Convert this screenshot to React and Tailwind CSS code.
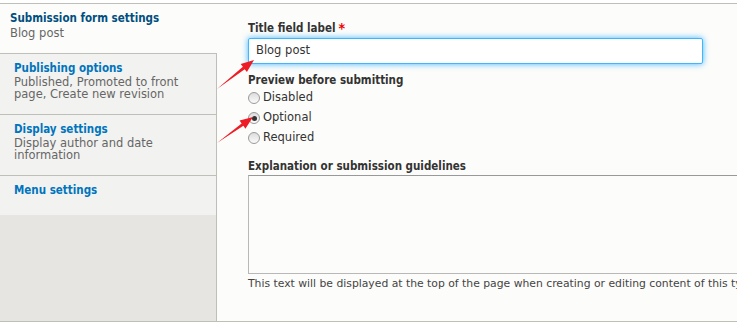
import React from "react";

const tabs = [
  {
    title: "Publishing options",
    summary: ["Published, Promoted to front", "page, Create new revision"],
  },
  {
    title: "Display settings",
    summary: ["Display author and date", "information"],
  },
  { title: "Menu settings", summary: [] },
];

const options = [
  { label: "Disabled", checked: false },
  { label: "Optional", checked: true },
  { label: "Required", checked: false },
];

function Radio({ checked }) {
  return (
    <span className="flex h-[12px] w-[12px] items-center justify-center rounded-full border border-[#9a9a9a] bg-gradient-to-b from-[#dcdcdc] to-[#fbfbfb]">
      {checked && <span className="h-[5px] w-[5px] rounded-full bg-[#333]" />}
    </span>
  );
}

function Arrows() {
  // red annotation arrows drawn over the form
  return (
    <svg
      className="pointer-events-none absolute left-0 top-0"
      width="737"
      height="322"
      viewBox="0 0 737 322"
    >
      <polygon
        fill="#ee1c24"
        points="217,89 244.7,69.2 246.9,71.9 254,60 240.7,64.1 242.9,66.8"
      />
      <polygon
        fill="#ee1c24"
        points="217,143 243.4,125.8 245.4,128.7 253,117 239.6,120.5 241.6,123.4"
      />
    </svg>
  );
}

export default function App() {
  const font = "font-['DejaVu_Sans',sans-serif]";
  const bold = "font-['DejaVu_Sans_Condensed','DejaVu_Sans',sans-serif] font-bold";

  return (
    <div className={`relative h-[322px] w-[737px] overflow-hidden bg-white pt-[3px] text-[11.5px] ${font}`}>
      <div className="flex h-[319px] w-[820px] border-y border-[#bfbfba] bg-[#fcfcfa]">
        {/* vertical tabs menu */}
        <ul className="flex w-[217px] shrink-0 flex-col">
          <li className="h-[49px] pl-[10px] pt-[6px]">
            <div className={`leading-[16px] text-[#004f80] ${bold}`}>
              Submission form settings
            </div>
            <div className="leading-[14px] text-[#666]">Blog post</div>
          </li>
          {tabs.map((tab) => (
            <li
              key={tab.title}
              className={`border-r border-t border-[#bfbfba] bg-[#f2f2f0] pl-[14px] pt-[6px] ${
                tab.summary.length ? "h-[61px]" : "h-[40px]"
              }`}
            >
              <div className={`leading-[16px] text-[#0074bd] ${bold}`}>{tab.title}</div>
              {tab.summary.map((line) => (
                <div key={line} className="leading-[12px] text-[#666]">
                  {line}
                </div>
              ))}
            </li>
          ))}
          <li className="flex-1 border-r border-[#bfbfba] bg-[#e6e5e1]" />
        </ul>

        {/* pane */}
        <div className="flex-1 pl-[31px] pt-[16px] text-[#333]">
          <div className={`flex items-center leading-[16px] ${bold}`}>
            Title field label
            <span className="ml-[3px] text-[14px] leading-none text-[#e00]">*</span>
          </div>
          <div className="mt-[2px] flex h-[26px] w-[455px] items-center rounded-[2px] border border-[#40b6ff] bg-white pl-[7px] shadow-[0_0_6px_#40b6ff]">
            Blog post
          </div>

          <div className={`mt-[8px] leading-[16px] ${bold}`}>Preview before submitting</div>
          <div className="flex flex-col">
            {options.map((opt) => (
              <label key={opt.label} className="flex h-[20px] items-center gap-[3px]">
                <Radio checked={opt.checked} />
                <span>{opt.label}</span>
              </label>
            ))}
          </div>

          <div className={`mt-[10px] leading-[16px] ${bold}`}>
            Explanation or submission guidelines
          </div>
          <div className="mt-px h-[99px] w-[560px] border border-[#b8b8b8] border-t-[#999] bg-[#fcfcfa]" />
          <div className="mt-[3px] whitespace-nowrap text-[10.8px] leading-[14px] text-[#444]">
            This text will be displayed at the top of the page when creating or editing content of this type.
          </div>
        </div>
      </div>
      <Arrows />
    </div>
  );
}
